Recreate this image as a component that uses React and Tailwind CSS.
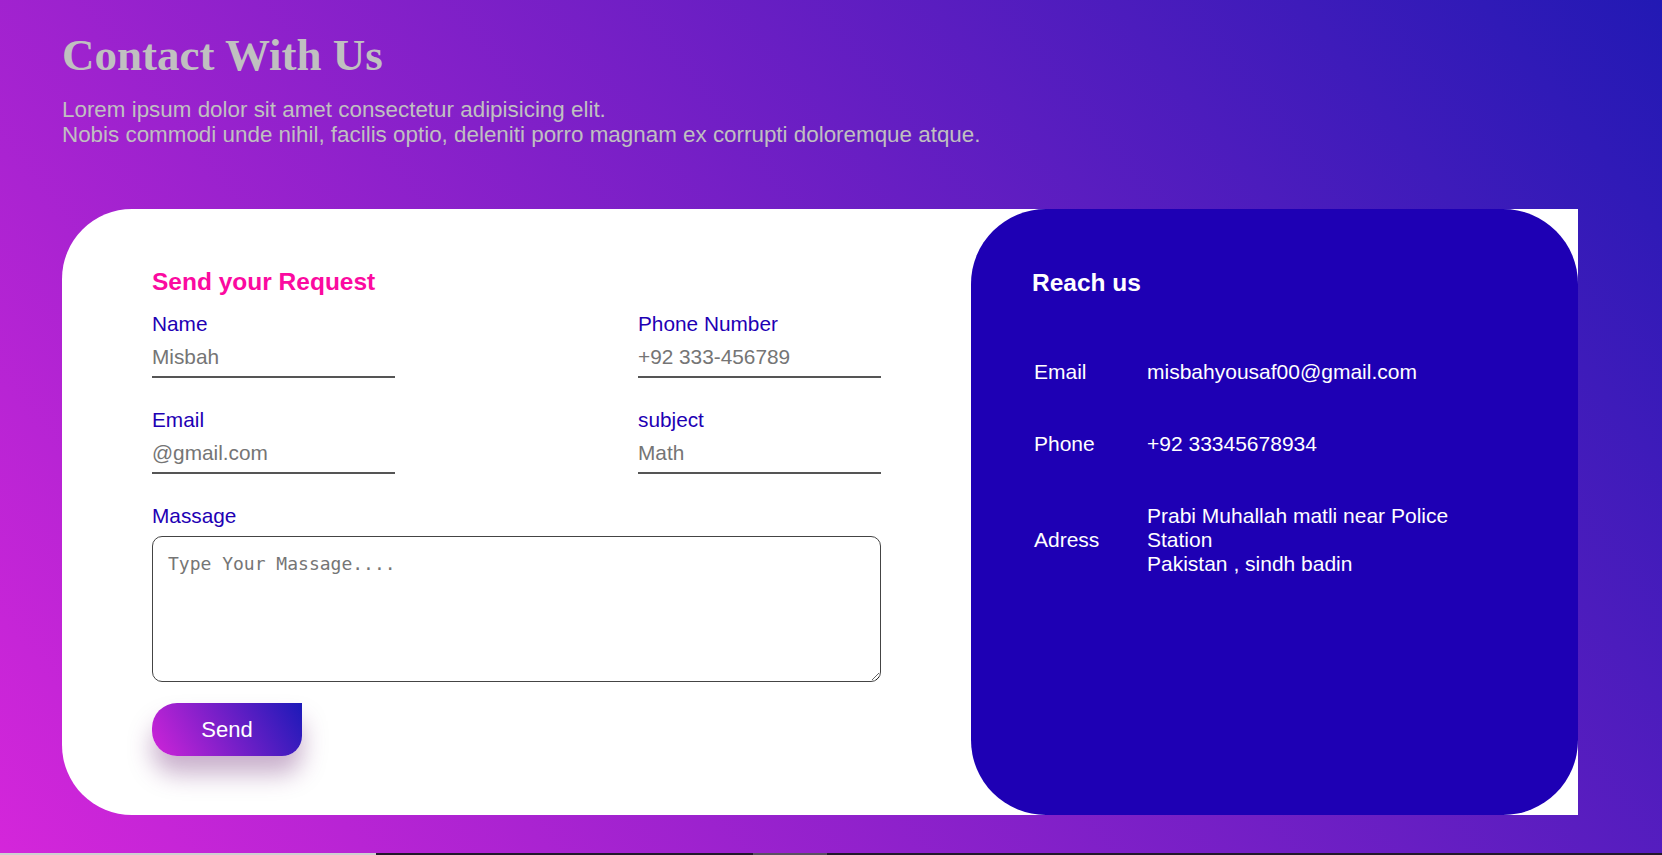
import React from 'react';

const ContactInfo = [
  { label: 'Email', value: 'misbahyousaf00@gmail.com' },
  { label: 'Phone', value: '+92 33345678934' },
];

const Field = ({ label, placeholder }) => (
  <div className="flex w-[243px] flex-col">
    <label className="text-[20.8px] leading-[23px] text-[#1e00b4]">{label}</label>
    <input
      type="text"
      placeholder={placeholder}
      className="h-[43px] w-full border-b-2 border-[#555] bg-transparent pt-[3px] text-[20.8px] text-black outline-none placeholder:text-[#757575]"
    />
  </div>
);

const App = () => {
  return (
    <div className="flex h-[855px] flex-col font-['Liberation_Sans',Arial,sans-serif]">
      <div className="flex-1 bg-[linear-gradient(52deg,#d426da,#2219b4)] pl-[62px] pt-[29px]">
        {/* Header */}
        <h1 className="font-['Liberation_Serif','Times_New_Roman',serif] text-[45px] font-bold leading-[53px] text-[#c0c0c0]">
          Contact With Us
        </h1>
        <p className="mt-[15px] text-[22.4px] leading-[25px] text-[#c0c0c0]">
          Lorem ipsum dolor sit amet consectetur adipisicing elit.
          <br />
          Nobis commodi unde nihil, facilis optio, deleniti porro magnam ex corrupti doloremque atque.
        </p>

        {/* Card */}
        <div className="mt-[62px] flex h-[606px] w-[1516px] rounded-l-[70px] bg-white">
          {/* Form */}
          <div className="w-[909px] px-[90px] pt-[59px]">
            <h2 className="text-[24.5px] font-bold leading-[28px] text-[#fb0aa0]">Send your Request</h2>

            <div className="mt-[16px] flex justify-between">
              <Field label="Name" placeholder="Misbah" />
              <Field label="Phone Number" placeholder="+92 333-456789" />
            </div>

            <div className="mt-[30px] flex justify-between">
              <Field label="Email" placeholder="@gmail.com" />
              <Field label="subject" placeholder="Math" />
            </div>

            <div className="mt-[30px] flex flex-col">
              <label className="text-[20.8px] leading-[23px] text-[#1e00b4]">Massage</label>
              <textarea
                placeholder="Type Your Massage...."
                className="mt-[9px] h-[146px] w-[729px] rounded-[10px] border border-[#444] px-[15px] pt-[16px] font-['DejaVu_Sans_Mono',monospace] text-[18px] leading-[21px] outline-none placeholder:text-[#757575]"
              />
            </div>

            <button className="mt-[21px] h-[53px] w-[150px] rounded-tl-[25px] rounded-bl-[25px] rounded-br-[20px] bg-[linear-gradient(60deg,#d024d8,#1c1ab8)] text-[22px] text-white shadow-[0_18px_24px_rgba(100,30,110,0.35)]">
              Send
            </button>
          </div>

          {/* Reach us */}
          <div className="w-[607px] rounded-[75px] bg-[#1e00b4] px-[61px] pt-[60px] text-white">
            <h2 className="text-[24.5px] font-bold leading-[28px]">Reach us</h2>
            <div className="mt-[39px] grid grid-cols-[115px_320px] items-center text-[21px] leading-[24px]">
              {ContactInfo.map((row) => (
                <React.Fragment key={row.label}>
                  <div className="py-[24px] pl-[2px]">{row.label}</div>
                  <div className="py-[24px]">{row.value}</div>
                </React.Fragment>
              ))}
              <div className="py-[24px] pl-[2px]">Adress</div>
              <div className="py-[24px]">
                Prabi Muhallah matli near Police Station
                <br />
                Pakistan , sindh badin
              </div>
            </div>
          </div>
        </div>
      </div>

      {/* bottom strip */}
      <div className="flex h-[2px] bg-[#22182a]">
        <div className="w-[376px] bg-[#cfcfcf]" />
        <div className="ml-[377px] w-[74px] bg-[#5a5060]" />
      </div>
    </div>
  );
};

export default App;
